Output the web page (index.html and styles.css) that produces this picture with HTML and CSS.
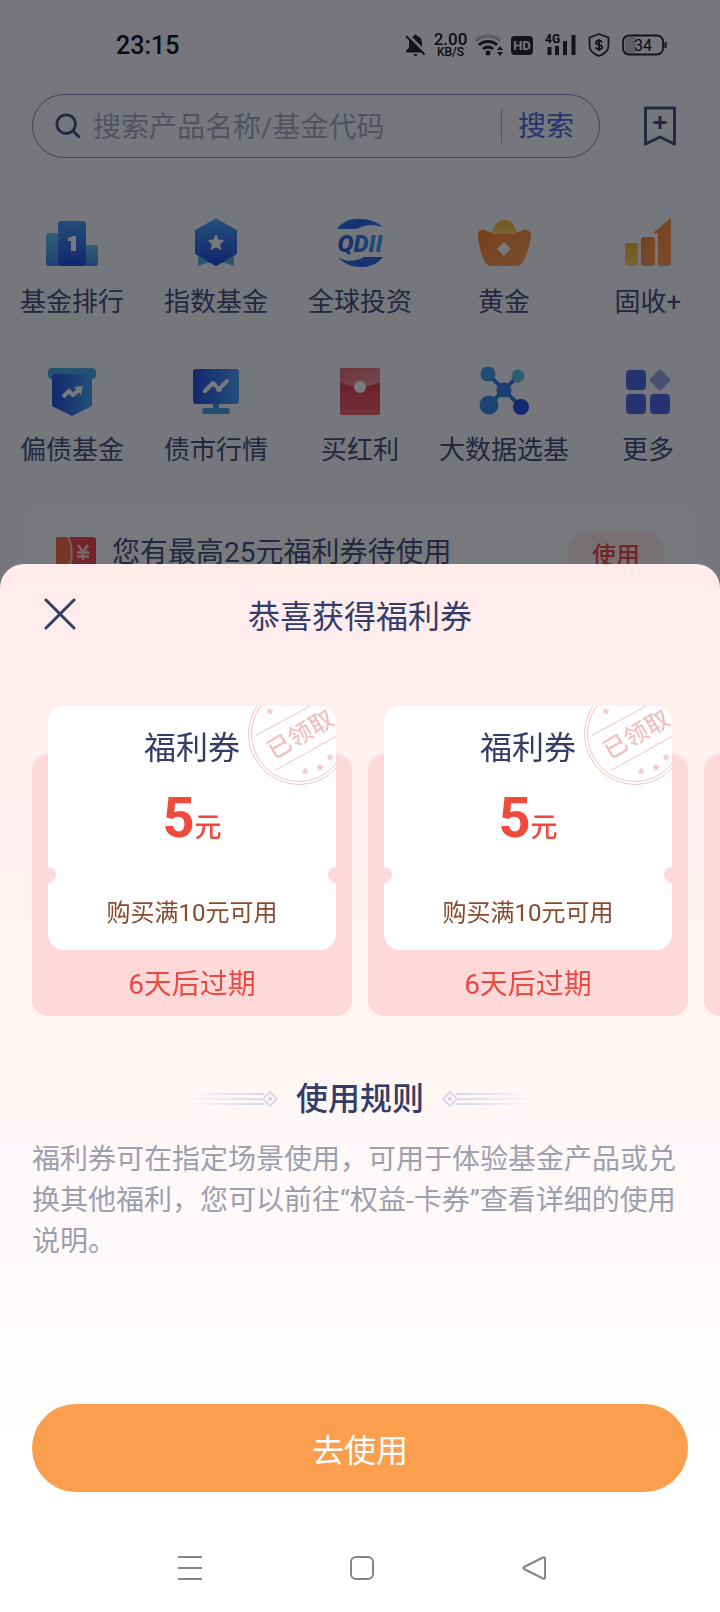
FILE: index.html
```html
<!DOCTYPE html>
<html lang="zh-CN">
<head>
    <meta charset="UTF-8">
    <meta name="viewport" content="width=device-width, initial-scale=1.0">
    <title>恭喜获得福利券</title>
    <link rel="stylesheet" href="styles.css">
</head>
<body>
    <div class="page">
        <div class="status-bar">
            <span class="time">23:15</span>
            <div class="status-icons">
                <div class="status-group">
                    <svg width="21" height="24" viewBox="0 0 21 24">
                        <path d="M10.500 1.500c-1 0-1.500.6-1.500 1.500C5.500 3.800 4 6.500 4 9.500v5L1 18v1.500h19V18l-3-3.500v-5c0-3-1.500-5.700-5-6.500 0-.9-.5-1.500-1.500-1.500z" fill="#15161b"/>
                        <path d="M8.500 21h4a2 2 0 0 1-4 0z" fill="#15161b"/>
                        <path d="M3 2l18 18" stroke="#f9fafc" stroke-width="3"/>
                        <path d="M1 3l18.500 18.500" stroke="#15161b" stroke-width="2"/>
                    </svg>
                    <div class="net-speed"><b>2.00</b><span>KB/S</span></div>
                    <svg width="28" height="24" viewBox="0 0 28 24">
                        <path d="M1 8a17 17 0 0 1 24 0" fill="none" stroke="#b9bac0" stroke-width="3"/>
                        <path d="M4 12a13 13 0 0 1 18 0" fill="none" stroke="#15161b" stroke-width="3"/>
                        <path d="M8 16a7.500 7.500 0 0 1 10 0" fill="none" stroke="#15161b" stroke-width="3"/>
                        <circle cx="13" cy="20" r="2.500" fill="#15161b"/>
                        <path d="M22 17l3-4 3 4zM22 19l3 4 3-4z" fill="#15161b"/>
                    </svg>
                    <svg width="22" height="24" viewBox="0 0 22 24">
                        <rect x="0" y="3" width="22" height="19" rx="4" fill="#15161b"/>
                        <text class="hd" x="11" y="17" text-anchor="middle">HD</text>
                    </svg>
                </div>
                <svg width="31" height="24" viewBox="0 0 31 24">
                    <text class="net-type" x="0" y="10">4G</text>
                    <path d="M4.500 22v-8M12 22V13M20 22V8M28.500 22V2" stroke="#15161b" stroke-width="4"/>
                </svg>
                <svg width="22" height="24" viewBox="0 0 22 24">
                    <path d="M11 1l9.500 3.500v8c0 5-4 8.500-9.500 10.500C5.500 21 1.500 17.500 1.500 12.500v-8z" fill="none" stroke="#15161b" stroke-width="1.800" stroke-linejoin="round"/>
                    <path d="M14 9.500c-.5-1.300-1.500-1.800-3-1.800-1.700 0-3 .7-3 2 0 3 6.200 1.400 6.200 4.400 0 1.400-1.300 2.200-3.200 2.200s-2.900-.7-3.200-2M11 6v12" fill="none" stroke="#15161b" stroke-width="1.800"/>
                </svg>
                <svg width="45" height="24" viewBox="0 0 45 24">
                    <path d="M6 4h8v16H6a3 3 0 0 1-3-3V7a3 3 0 0 1 3-3z" fill="#c3c4ca"/>
                    <rect x="1" y="2.500" width="40" height="19" rx="6" fill="none" stroke="#15161b" stroke-width="1.800"/>
                    <path d="M43.500 9v6" stroke="#15161b" stroke-width="2"/>
                    <text class="battery" x="21" y="18" text-anchor="middle">34</text>
                </svg>
            </div>
        </div>

        <div class="search-row">
            <form class="search-box">
                <svg width="26" height="26" viewBox="0 0 28 28" fill="none" stroke="#3b456d" stroke-width="3">
                    <circle cx="12" cy="12" r="10"/>
                    <path d="M19 19l7.500 7.500"/>
                </svg>
                <input type="text" aria-label="搜索" placeholder="搜索产品名称/基金代码">
                <button type="button">搜索</button>
            </form>
            <button class="bookmark" type="button" aria-label="收藏">
                <svg width="32" height="40" viewBox="0 0 32 40" fill="none" stroke="#3b456d" stroke-width="3" stroke-linejoin="round">
                    <path d="M1.500 2h29v36L16 31 1.500 38z"/>
                    <path d="M16 10v13M9.500 16.500h13"/>
                </svg>
            </button>
        </div>

        <nav class="menu-grid">
            <a href="#">
                <svg class="menu-icon" viewBox="0 0 56 56">
                    <defs>
                        <linearGradient id="blue" x1="0" y1="0" x2="0" y2="1"><stop offset="0" stop-color="#3f9cf5"/><stop offset="1" stop-color="#1440dc"/></linearGradient>
                        <linearGradient id="blue-side" x1="0" y1="0" x2="1" y2="0"><stop offset="0" stop-color="#1646dc"/><stop offset="1" stop-color="#3f9cf5"/></linearGradient>
                        <linearGradient id="cyan" x1="0" y1="0" x2="0" y2="1"><stop offset="0" stop-color="#55c3ea"/><stop offset="1" stop-color="#2f86e8"/></linearGradient>
                        <linearGradient id="orange" x1="0" y1="0" x2="1" y2="1"><stop offset="0" stop-color="#ff7a1e"/><stop offset="1" stop-color="#ff9a50"/></linearGradient>
                        <linearGradient id="yellow" x1="0" y1="0" x2="0" y2="1"><stop offset="0" stop-color="#f2b21c"/><stop offset="1" stop-color="#ffd35a"/></linearGradient>
                        <linearGradient id="red" x1="0" y1="0" x2="0" y2="1"><stop offset="0" stop-color="#df1f2e"/><stop offset="1" stop-color="#ee5560"/></linearGradient>
                        <linearGradient id="flap" x1="0" y1="0" x2="1" y2="1"><stop offset="0" stop-color="#e85a64"/><stop offset="1" stop-color="#f09a9c"/></linearGradient>
                    </defs>
                    <rect x="2" y="19" width="20" height="33" rx="3" fill="url(#cyan)"/>
                    <rect x="34" y="31" width="20" height="21" rx="3" fill="url(#cyan)"/>
                    <rect x="14" y="7" width="28" height="45" rx="3" fill="url(#blue)"/>
                    <path d="M24 24l5-2h3v15h-5V27h-3z" fill="#fff"/>
                </svg>
                <span>基金排行</span>
            </a>
            <a href="#">
                <svg class="menu-icon" viewBox="0 0 56 56">
                    <path d="M10 38h36v14l-9-3H19l-9 3z" fill="#46aee0"/>
                    <path d="M28 6l19.500 11v22L28 50.500 8.500 39V17z" fill="url(#blue)" stroke="url(#blue)" stroke-width="3" stroke-linejoin="round"/>
                    <path d="M28 21l2.200 5 5.300.5-4 3.600 1.200 5.400-4.700-2.800-4.700 2.800 1.200-5.400-4-3.600 5.300-.5z" fill="#fff" stroke="#fff"/>
                </svg>
                <span>指数基金</span>
            </a>
            <a href="#">
                <svg class="menu-icon" viewBox="0 0 56 56">
                    <path d="M5 15C10 8 19 4 28 5c9 0 18 3 22 8-8-3-16-3-25 2z" fill="#1d5fe6"/>
                    <path d="M6 43c7 5 17 5 26 0h19C46 50 37 53.500 28 53c-9 0-17-4-22-10z" fill="#1d5fe6"/>
                    <text class="qdii" x="28" y="38" text-anchor="middle" fill="url(#blue-side)">QDII</text>
                </svg>
                <span>全球投资</span>
            </a>
            <a href="#">
                <svg class="menu-icon" viewBox="0 0 56 56">
                    <path d="M8 16c6 2 11 4 20 4s14-2 20-4c4-1 8 2 7 7-1 8-4 18-8 25-2 3-4 4-7 4H16c-3 0-5-1-7-4C5 41 3 31 2 23c-1-5 2-8 6-7z" fill="url(#orange)"/>
                    <path d="M16.500 20a12 14 0 0 1 24 0z" fill="url(#yellow)"/>
                    <path d="M28 28l7 7-7 7-7-7z" fill="#fff"/>
                </svg>
                <span>黄金</span>
            </a>
            <a href="#">
                <svg class="menu-icon" viewBox="0 0 56 56">
                    <rect x="5" y="29" width="13" height="23" rx="3" fill="url(#yellow)"/>
                    <rect x="21" y="23" width="14" height="29" rx="3" fill="url(#orange)"/>
                    <path d="M51 4v45a3 3 0 0 1-3 3h-7a3 3 0 0 1-3-3V19h-5z" fill="url(#orange)"/>
                </svg>
                <span>固收+</span>
            </a>
            <a href="#">
                <svg class="menu-icon" viewBox="0 0 56 56">
                    <rect x="4" y="6" width="48" height="11" rx="4" fill="#3fa4dc"/>
                    <path d="M11 12h34a3 3 0 0 1 3 3v29L28 54 8 44V15a3 3 0 0 1 3-3z" fill="url(#blue-side)"/>
                    <path d="M19 35l6-6 4 4 7-6" fill="none" stroke="#fff" stroke-width="4"/>
                    <path d="M30 25l9-1-2 9z" fill="#fff"/>
                </svg>
                <span>偏债基金</span>
            </a>
            <a href="#">
                <svg class="menu-icon" viewBox="0 0 56 56">
                    <path d="M25 40h6v7h-6z" fill="#2f86e8"/>
                    <rect x="14" y="46" width="28" height="6" rx="3" fill="#3a9be0"/>
                    <rect x="5" y="7" width="46" height="35" rx="3" fill="url(#blue-side)"/>
                    <path d="M17 29l8-8M25 21l3 3M34 24l5-5" fill="none" stroke="#fff" stroke-width="4" stroke-linecap="round"/>
                    <circle cx="31" cy="27" r="3" fill="#fff"/>
                </svg>
                <span>债市行情</span>
            </a>
            <a href="#">
                <svg class="menu-icon" viewBox="0 0 56 56">
                    <rect x="8" y="6" width="40" height="47" rx="2" fill="url(#red)"/>
                    <path d="M10 6h36a2 2 0 0 1 2 2v12c-12 6-28 6-40 0V8a2 2 0 0 1 2-2z" fill="url(#flap)"/>
                    <circle cx="28" cy="25" r="6" fill="#fff"/>
                </svg>
                <span>买红利</span>
            </a>
            <a href="#">
                <svg class="menu-icon" viewBox="0 0 56 56">
                    <path d="M12 12l33 33M42 14L13 43" stroke="#2476e0" stroke-width="4"/>
                    <circle cx="12" cy="12" r="7.500" fill="#3294ea"/>
                    <circle cx="42" cy="14" r="6.500" fill="#48bede"/>
                    <circle cx="28" cy="28" r="7.500" fill="#2476e0"/>
                    <circle cx="13" cy="43" r="9.500" fill="#2d82ea"/>
                    <circle cx="45" cy="45" r="8" fill="#1446e0"/>
                </svg>
                <span>大数据选基</span>
            </a>
            <a href="#">
                <svg class="menu-icon" viewBox="0 0 56 56" fill="#3d5de0">
                    <rect x="6" y="8" width="20" height="20" rx="4"/>
                    <rect x="6" y="32" width="20" height="20" rx="4"/>
                    <rect x="30" y="32" width="20" height="20" rx="4"/>
                    <rect x="32" y="10" width="16" height="16" rx="3" fill="#929ee6" transform="rotate(45 40 18)"/>
                </svg>
                <span>更多</span>
            </a>
        </nav>

        <div class="banner">
            <svg width="40" height="32" viewBox="0 0 40 32">
                <rect width="40" height="32" rx="3" fill="#f03c3c"/>
                <path d="M3 0h9c5 9 5 22 0 32H3a3 3 0 0 1-3-3V3a3 3 0 0 1 3-3z" fill="#f4643c"/>
                <path d="M12 0c5 9 5 22 0 32" fill="none" stroke="#ffc9a8" stroke-width="2"/>
                <path d="M22 8l5 7 5-7M27 15v8M21 15.500h12M21 19.500h12" fill="none" stroke="#ffd8d0" stroke-width="2.500"/>
            </svg>
            <p>您有最高25元福利券待使用</p>
            <button type="button">使用</button>
        </div>
    </div>

    <div class="mask"></div>

    <div class="sheet" role="dialog" aria-labelledby="sheet-title">
        <div class="sheet-header">
            <button class="close" type="button" aria-label="关闭">
                <svg width="32" height="32" viewBox="0 0 32 32" stroke="#333d67" stroke-width="3" stroke-linecap="round">
                    <path d="M2 2l28 28M30 2L2 30"/>
                </svg>
            </button>
            <h1 id="sheet-title">恭喜获得福利券</h1>
        </div>

        <div class="coupons">
            <div class="coupon">
                <div class="ticket">
                    <div class="ticket-main">
                        <h2>福利券</h2>
                        <p class="price">5<small>元</small></p>
                    </div>
                    <p class="ticket-rule">购买满10元可用</p>
                    <svg class="stamp" width="88" height="80" viewBox="0 0 88 80" fill="none" stroke="#f3c3c5">
                        <defs>
                            <path id="star" d="M0-4l1.200 2.500 2.800.4-2 2 .5 2.800L0 2.400l-2.500 1.300.5-2.800-2-2 2.800-.4z"/>
                        </defs>
                        <circle cx="51" cy="28" r="50.500"/>
                        <circle cx="51" cy="28" r="47.500"/>
                        <path d="M8 29.500L62 0M27 64.500L88 30.500"/>
                        <g fill="#f6d0d1" stroke="none">
                            <use href="#star" x="22" y="5"/>
                            <use href="#star" x="57" y="65"/>
                            <use href="#star" x="72" y="61"/>
                            <use href="#star" x="82" y="51"/>
                        </g>
                        <text x="52" y="37" text-anchor="middle" transform="rotate(-30 52 28)">已领取</text>
                    </svg>
                </div>
                <p class="expire">6天后过期</p>
            </div>
            <div class="coupon">
                <div class="ticket">
                    <div class="ticket-main">
                        <h2>福利券</h2>
                        <p class="price">5<small>元</small></p>
                    </div>
                    <p class="ticket-rule">购买满10元可用</p>
                    <svg class="stamp" width="88" height="80" viewBox="0 0 88 80" fill="none" stroke="#f3c3c5">
                        <circle cx="51" cy="28" r="50.500"/>
                        <circle cx="51" cy="28" r="47.500"/>
                        <path d="M8 29.500L62 0M27 64.500L88 30.500"/>
                        <g fill="#f6d0d1" stroke="none">
                            <use href="#star" x="22" y="5"/>
                            <use href="#star" x="57" y="65"/>
                            <use href="#star" x="72" y="61"/>
                            <use href="#star" x="82" y="51"/>
                        </g>
                        <text x="52" y="37" text-anchor="middle" transform="rotate(-30 52 28)">已领取</text>
                    </svg>
                </div>
                <p class="expire">6天后过期</p>
            </div>
            <div class="coupon"></div>
        </div>

        <div class="rules">
            <h2>
                <svg width="94" height="24" viewBox="0 0 94 24" fill="none" stroke="#d9dce8">
                    <defs>
                        <linearGradient id="fade" x1="0" y1="0" x2="1" y2="0"><stop offset="0" stop-color="#d3d7e5" stop-opacity="0"/><stop offset="1" stop-color="#d3d7e5"/></linearGradient>
                    </defs>
                    <path d="M20 6h60v2H20zM0 11h78v2H0zM20 16h60v2H20z" fill="url(#fade)" stroke="none"/>
                    <path d="M86 5l7 7-7 7-7-7z" stroke-width="2" fill="#fff6f6"/>
                    <path d="M86 9.500l2.500 2.500-2.500 2.500-2.500-2.500z" fill="#cdd2e3" stroke="none"/>
                </svg>
                使用规则
                <svg class="flip" width="94" height="24" viewBox="0 0 94 24" fill="none" stroke="#d9dce8">
                    <path d="M20 6h60v2H20zM0 11h78v2H0zM20 16h60v2H20z" fill="url(#fade)" stroke="none"/>
                    <path d="M86 5l7 7-7 7-7-7z" stroke-width="2" fill="#fff6f6"/>
                    <path d="M86 9.500l2.500 2.500-2.500 2.500-2.500-2.500z" fill="#cdd2e3" stroke="none"/>
                </svg>
            </h2>
            <p>福利券可在指定场景使用，可用于体验基金产品或兑换其他福利，您可以前往“权益-卡券”查看详细的使用说明。</p>
        </div>

        <button class="use-btn" type="button">去使用</button>

        <div class="nav-bar">
            <button type="button" aria-label="最近任务">
                <svg width="26" height="26" viewBox="0 0 26 26" fill="none" stroke="#858585" stroke-width="2">
                    <path d="M1 2h24M1 13h24M1 24h24"/>
                </svg>
            </button>
            <button type="button" aria-label="主屏幕">
                <svg width="26" height="26" viewBox="0 0 26 26" fill="none" stroke="#858585" stroke-width="2">
                    <rect x="2" y="2" width="22" height="22" rx="5"/>
                </svg>
            </button>
            <button type="button" aria-label="返回">
                <svg width="26" height="26" viewBox="0 0 26 26" fill="none" stroke="#858585" stroke-width="2" stroke-linejoin="round">
                    <path d="M22 2.500L3 12a1.200 1.200 0 0 0 0 2l19 9.500a1.200 1.200 0 0 0 2-1V3.500a1.200 1.200 0 0 0-2-1z"/>
                </svg>
            </button>
        </div>
    </div>
</body>
</html>
```
FILE: styles.css
```css
* {
    margin: 0;
    padding: 0;
    box-sizing: border-box;
}

body {
    font-family: Roboto, 'Noto Sans CJK SC', sans-serif;
    background: #f9fafc;
    color: #333d67;
    min-height: 100vh;
}

button {
    border: none;
    background: none;
    font-family: inherit;
    color: inherit;
    cursor: pointer;
}

svg {
    display: block;
    flex-shrink: 0;
}

h1,
h2 {
    font-weight: 400;
}

.page {
    color: #3b456d;
}

/* Status bar */
.status-bar {
    display: flex;
    justify-content: space-between;
    align-items: center;
    height: 90px;
    padding: 0 53px 0 116px;
    color: #000;
}

.time {
    font-size: 25px;
    font-weight: 500;
}

.status-icons {
    display: flex;
    align-items: center;
    gap: 12px;
}

.status-group {
    display: flex;
    align-items: center;
    gap: 8px;
}

.net-speed {
    display: flex;
    flex-direction: column;
    align-items: center;
    width: 33px;
    font-size: 12px;
    line-height: 12px;
    font-weight: 500;
}

.net-speed b {
    font-size: 17px;
    line-height: 14px;
    font-weight: 500;
}

.hd {
    font-size: 13px;
    font-weight: 700;
    fill: #f9fafc;
}

.net-type {
    font-size: 12px;
    font-weight: 700;
}

.battery {
    font-size: 16px;
}

/* Search */
.search-row {
    display: flex;
    align-items: center;
    gap: 44px;
    margin-top: 4px;
    padding: 0 44px 0 32px;
}

.search-box {
    flex: 1;
    display: flex;
    align-items: center;
    gap: 12px;
    height: 64px;
    padding: 0 25px 0 22px;
    border: 1px solid #7f86ad;
    border-radius: 32px;
}

.search-box input {
    flex: 1;
    min-width: 0;
    padding-top: 2px;
    border: none;
    outline: none;
    background: none;
    font-family: inherit;
    font-size: 28px;
}

.search-box input::placeholder {
    color: #a3a7b8;
    opacity: 1;
}

.search-box button {
    padding: 2px 0 0 16px;
    border-left: 1px solid #9aa5d8;
    font-size: 28px;
    line-height: 32px;
    color: #3f5de0;
}

/* Menu */
.menu-grid {
    display: grid;
    grid-template-columns: repeat(5, 1fr);
    row-gap: 42px;
    margin-top: 56px;
}

.menu-grid a {
    display: flex;
    flex-direction: column;
    align-items: center;
    gap: 14px;
    font-size: 26px;
    line-height: 36px;
    color: inherit;
    text-decoration: none;
    white-space: nowrap;
}

.menu-icon {
    width: 56px;
    height: 56px;
}

.qdii {
    font-size: 24px;
    font-weight: 900;
    font-style: italic;
}

.banner {
    display: flex;
    align-items: center;
    gap: 16px;
    height: 94px;
    margin: 38px 24px 0;
    padding: 0 32px;
    border-radius: 24px;
    background: #fff;
    font-size: 28px;
}

.banner p {
    flex: 1;
    line-height: 36px;
}

.banner button {
    width: 96px;
    height: 44px;
    border-radius: 22px;
    background: #fdeceb;
    font-size: 24px;
    font-weight: 500;
    color: #f03c3c;
}

.mask {
    position: fixed;
    inset: 0;
    background: rgba(18, 19, 26, 0.57);
}

/* Bottom sheet */
.sheet {
    position: fixed;
    left: 0;
    right: 0;
    bottom: 0;
    border-radius: 24px 24px 0 0;
    background: linear-gradient(#ffebec, #fff5f5 45%, #fff 85%);
}

.sheet-header {
    display: flex;
    align-items: center;
    height: 100px;
    padding: 0 44px;
}

.sheet-header h1 {
    flex: 1;
    margin-right: 32px;
    font-size: 32px;
    text-align: center;
}

.coupons {
    display: flex;
    gap: 16px;
    padding: 90px 32px 0;
    overflow: hidden;
}

.coupon {
    flex: 0 0 320px;
    padding: 0 16px;
    border-radius: 16px;
    background: #fed9da;
    text-align: center;
}

.ticket {
    position: relative;
    margin-top: -48px;
    border-radius: 16px;
    background: #fff;
    overflow: hidden;
}

.ticket-main {
    padding: 20px 0 25px;
}

.ticket h2 {
    font-size: 32px;
    line-height: 44px;
}

.price {
    margin-top: 16px;
    font-size: 56px;
    font-weight: 700;
    line-height: 64px;
    color: #f04a3c;
}

.price small {
    font-size: 27px;
    font-weight: 500;
    line-height: 28px;
}

.ticket-rule {
    position: relative;
    padding: 20px 0 19px;
    font-size: 24px;
    line-height: 36px;
    color: #8a4a2c;
}

/* notches on both sides of the tear line */
.ticket-rule::before,
.ticket-rule::after {
    content: '';
    position: absolute;
    top: -8px;
    width: 16px;
    height: 16px;
    border-radius: 50%;
    background: #fed9da;
}

.ticket-rule::before {
    left: -8px;
}

.ticket-rule::after {
    right: -8px;
}

.stamp {
    position: absolute;
    top: 0;
    right: 0;
}

.stamp text {
    font-size: 24px;
    font-weight: 500;
    fill: #f3c0c2;
    stroke: none;
}

.expire {
    padding-top: 4px;
    font-size: 28px;
    line-height: 62px;
    color: #ea4b41;
}

.rules {
    margin-top: 60px;
    padding: 0 32px;
}

.rules h2 {
    display: flex;
    justify-content: center;
    align-items: center;
    gap: 18px;
    font-size: 32px;
    font-weight: 500;
    line-height: 46px;
}

.flip {
    transform: scaleX(-1);
}

.rules p {
    margin-top: 17px;
    font-size: 28px;
    line-height: 41px;
    color: #9c9fb0;
}

.use-btn {
    display: block;
    width: calc(100% - 64px);
    height: 88px;
    margin: 142px 32px 0;
    border-radius: 44px;
    background: #fb9e4d;
    font-size: 32px;
    color: #fff;
}

.nav-bar {
    display: flex;
    justify-content: center;
    align-items: center;
    gap: 146px;
    height: 88px;
    margin-top: 32px;
    padding-left: 3px;
}
```
